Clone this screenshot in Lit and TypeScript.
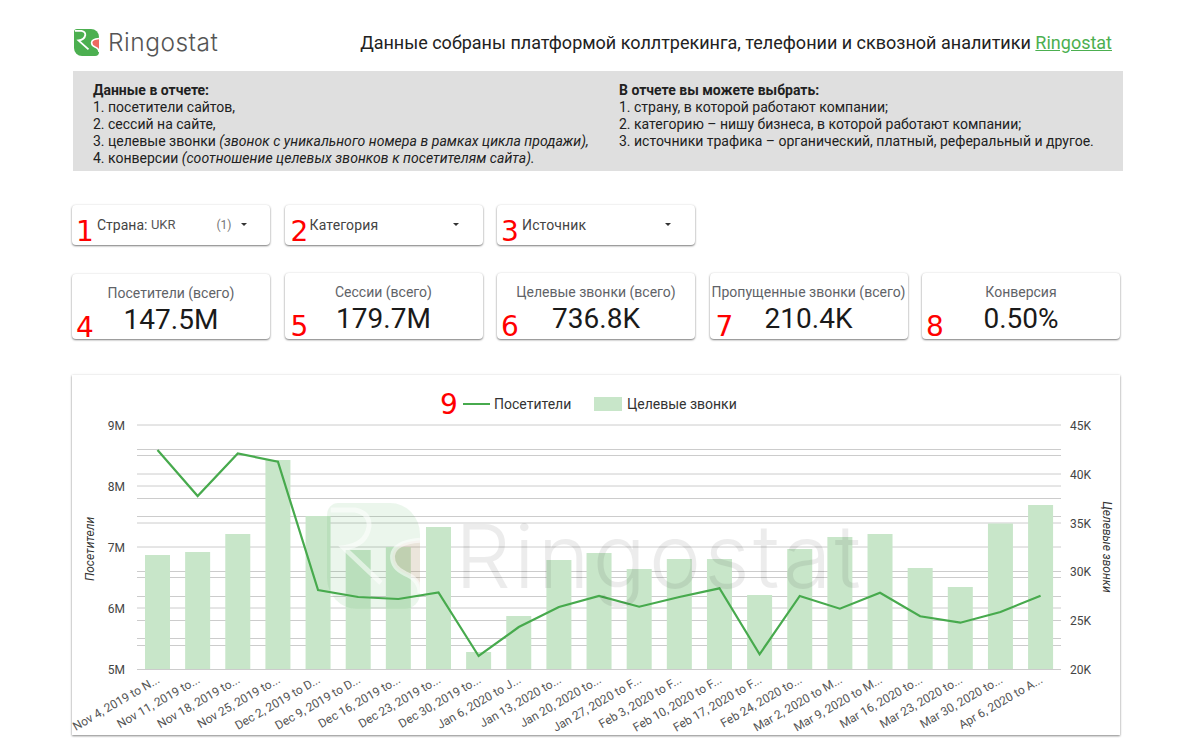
import { LitElement, html, css, svg } from "lit";
import { customElement } from "lit/decorators.js";

const tops = [555,552,534,460,516,550,547,527,652,616,560,553,569,559,559,595,549,537,534,568,587,523.5,505];
const lineY = [450,496,453.5,461.7,590,597,599,592.5,656,627,607,596,606.7,597,588.3,654.3,596,608.7,592.7,616.3,622.7,612,595.7];
const labels = ["Nov 4, 2019 to N...","Nov 11, 2019 to...","Nov 18, 2019 to...","Nov 25, 2019 to...","Dec 2, 2019 to D...","Dec 9, 2019 to D...","Dec 16, 2019 to...","Dec 23, 2019 to...","Dec 30, 2019 to...","Jan 6, 2020 to J...","Jan 13, 2020 to...","Jan 20, 2020 to...","Jan 27, 2020 to F...","Feb 3, 2020 to F...","Feb 10, 2020 to F...","Feb 17, 2020 to F...","Feb 24, 2020 to...","Mar 2, 2020 to M...","Mar 9, 2020 to M...","Mar 16, 2020 to...","Mar 23, 2020 to...","Mar 30, 2020 to...","Apr 6, 2020 to A..."];
const gridYs = [425,449.5,455.5,474,486,498.5,516.5,523,547,571.5,577.5,596.5,608,620.5,638.5,645.5,669.5];
const leftTicks: [string, number][] = [["9M",425],["8M",486],["7M",547],["6M",608],["5M",669]];
const rightTicks: [string, number][] = [["45K",425],["40K",474],["35K",523],["30K",571.5],["25K",620.5],["20K",669]];
const STEP = 40.14;
// the chart svg starts at x=72, y=375 of the page
const OX = 72, OY = 375;

const BODY = "M3 0H17A8 8 0 0 1 25 8V23A4 4 0 0 1 21 27H8A8 8 0 0 1 0 19V3A3 3 0 0 1 3 0Z";
const RED = "M25 9.500Q18 10 17.600 13.500Q17.500 16.500 21 18Q25 19.500 25 22Z";
const RPATH = "M1 1.800H7.500Q11.500 2.500 11.300 6Q10.500 10.800 4.500 11.400L14.500 20.400";
const SPATH = "M25 9.500Q18 10 17.600 13.500Q17.500 16.500 21 18Q25 19.500 25 23";

const logoMark = () => svg`
  <svg class="mark" width="25" height="27" viewBox="0 0 25 27">
    <path d=${BODY} fill="#4caf50"/>
    <path d=${RED} fill="#ee6b60"/>
    <path d=${RPATH} fill="none" stroke="#fff" stroke-width="1.800"/>
    <path d=${SPATH} fill="none" stroke="#fff" stroke-width="1.600"/>
  </svg>`;

const digit = css`
  .n { position: absolute; left: 4px; font-size: 28px; line-height: 36px; color: #f00; font-family: "DejaVu Sans", sans-serif; }
  :host([num="2"]) .n, :host([num="5"]) .n, :host([num="7"]) .n { left: 6px; }
`;

@customElement("kpi-card")
class KpiCard extends LitElement {
  static properties = { label: {}, value: {}, num: { reflect: true } };
  label = ""; value = ""; num = "";
  static styles = [digit, css`
    :host { display: block; height: 65px; position: relative; background: #fff; border-radius: 4px;
      box-shadow: 0 1px 2px rgba(0,0,0,.5), 0 0 3px rgba(0,0,0,.07); text-align: center; box-sizing: border-box; padding-top: 11px; }
    .l { font-size: 14px; line-height: 16px; color: #5f6368; white-space: nowrap; }
    .v { font-size: 28px; line-height: 32px; color: #1a1a1a; margin-top: 3px; }
    .n { top: 36px; }
  `];
  render() {
    return html`<div class="l">${this.label}</div><div class="v">${this.value}</div><span class="n">${this.num}</span>`;
  }
}

@customElement("filter-box")
class FilterBox extends LitElement {
  static properties = { num: { reflect: true } };
  num = "";
  static styles = [digit, css`
    :host { display: flex; align-items: center; height: 40px; position: relative; background: #fff; border-radius: 4px;
      box-shadow: 0 1px 2px rgba(0,0,0,.5), 0 0 3px rgba(0,0,0,.07); box-sizing: border-box; font-size: 14px; color: #444; padding-bottom: 1px; }
    ::slotted(*) { flex: 1; }
    .n { top: 9px; }
  `];
  render() { return html`<slot></slot><span class="n">${this.num}</span>`; }
}

@customElement("app-root")
class AppRoot extends LitElement {
  static styles = css`
    :host { display: block; width: 1184px; height: 743px; overflow: hidden; background: #fff; font-family: Roboto, sans-serif; color: #212121; }
    .page { padding: 0 61px 0 72px; display: flex; flex-direction: column; }
    header { height: 71px; display: flex; align-items: center; justify-content: space-between; padding: 14px 11px 0 2px; box-sizing: border-box; }
    .logo { display: flex; align-items: center; gap: 9px; margin-top: -1px; }
    .mark { display: block; }
    .word { font-family: Inter, sans-serif; font-weight: 300; font-size: 24.500px; color: #555; line-height: 30px; letter-spacing: .5px; }
    .tag { font-size: 18px; color: #222; }
    .tag a { color: #4caf50; text-decoration: underline; }
    .info { background: #dfdfdf; height: 100px; width: 1050px; margin-left: 1px; box-sizing: border-box; padding: 10.500px 20px; display: grid; grid-template-columns: 526px 1fr;
      font-size: 14px; line-height: 17px; color: #212121; }
    .info b { font-weight: 700; }
    .info i { font-style: italic; letter-spacing: .05px; }
    .filters, .kpis { display: grid; grid-template-columns: repeat(5, 198px); column-gap: 14.500px; }
    .filters { margin-top: 34px; }
    .f1 { padding-left: 25px; display: flex; align-items: center; }
    .f1 .s { font-size: 13px; color: #555; margin-left: 3.500px; }
    .f1 .c { font-size: 12px; color: #777; margin-left: 41px; }
    .f2 { padding-left: 25px; display: flex; align-items: center; color: #444; letter-spacing: .15px; }
    .arrow { width: 0; height: 0; border: 3.500px solid transparent; border-top: 3.500px solid #333; border-bottom: 0; display: block; margin-left: auto; }
    .f1 .arrow { margin-left: 9px; }
    .f2 .arrow { margin-right: 24px; }
    .kpis { margin-top: 29px; }
    .kpis kpi-card:not(:first-child) { margin-top: -1px; height: 66px; }
    .chart { margin-top: 36px; width: 1048px; height: 360px; background: #fff; box-shadow: 0 1px 2px rgba(0,0,0,.45), 0 0 3px rgba(0,0,0,.08); position: relative; }
    .chart svg.plot { display: block; overflow: visible; }
    .legend { font-size: 14px; fill: #333; }
    .tick { font-size: 12px; fill: #444; }
    .axis { font-size: 12px; fill: #333; font-style: italic; }
    .date { font-size: 12px; fill: #555; }
    .big9 { font-size: 28px; fill: #f00; font-family: "DejaVu Sans", sans-serif; }
    .wm { font-family: Inter, sans-serif; font-weight: 300; font-size: 88px; letter-spacing: 3.200px; fill: #000; opacity: .07; }
  `;

  render() {
    const x = (i: number) => 145 + i * STEP - OX;
    const cx = (i: number) => 157.5 + i * STEP - OX;
    const pts = lineY.map((y, i) => `${cx(i)},${y - OY}`).join(" ");
    return html`<div class="page">
      <header>
        <div class="logo">${logoMark()}<span class="word">Ringostat</span></div>
        <div class="tag">Данные собраны платформой коллтрекинга, телефонии и сквозной аналитики <a>Ringostat</a></div>
      </header>
      <section class="info">
        <div><b>Данные в отчете:</b><br>1. посетители сайтов,<br>2. сессий на сайте,<br>3. целевые звонки <i>(звонок с уникального номера в рамках цикла продажи),</i><br>4. конверсии <i>(соотношение целевых звонков к посетителям сайта).</i></div>
        <div><b>В отчете вы можете выбрать:</b><br>1. страну, в которой работают компании;<br>2. категорию – нишу бизнеса, в которой работают компании;<br>3. источники трафика – органический, платный, реферальный и другое.</div>
      </section>
      <div class="filters">
        <filter-box num="1"><div class="f1">Страна:<span class="s">UKR</span><span class="c">(1)</span><span class="arrow"></span></div></filter-box>
        <filter-box num="2"><div class="f2">Категория<span class="arrow"></span></div></filter-box>
        <filter-box num="3"><div class="f2">Источник<span class="arrow"></span></div></filter-box>
      </div>
      <div class="kpis">
        <kpi-card label="Посетители (всего)" value="147.5M" num="4"></kpi-card>
        <kpi-card label="Сессии (всего)" value="179.7M" num="5"></kpi-card>
        <kpi-card label="Целевые звонки (всего)" value="736.8K" num="6"></kpi-card>
        <kpi-card label="Пропущенные звонки (всего)" value="210.4K" num="7"></kpi-card>
        <kpi-card label="Конверсия" value="0.50%" num="8"></kpi-card>
      </div>
      <div class="chart">
        <svg class="plot" width="1048" height="360">
          ${gridYs.map(y => svg`<line x1=${137-OX} x2=${1061-OX} y1=${y-OY} y2=${y-OY} stroke="#ccc" stroke-width="1"/>`)}
          ${tops.map((t, i) => svg`<rect x=${x(i)} y=${t-OY} width="25" height=${669-t} fill="#c8e6c9"/>`)}
          <polyline points=${pts} fill="none" stroke="#47aa4d" stroke-width="2.200"/>
          <g transform="translate(${327-OX},${503-OY}) scale(3.72,3.92)">
            <path d=${BODY} fill="#4caf50" opacity=".11"/>
            <path d=${RED} fill="#ee6b60" opacity=".12"/>
            <path d=${RPATH} fill="none" stroke="#fff" stroke-width="1.300" opacity=".55"/>
            <path d=${SPATH} fill="none" stroke="#fff" stroke-width="1.300" opacity=".55"/>
          </g>
          <text class="wm" x=${455-OX} y=${588-OY}>Ringostat</text>
          ${leftTicks.map(([s, y]) => svg`<text class="tick" x=${125-OX} y=${y+4.500-OY} text-anchor="end">${s}</text>`)}
          ${rightTicks.map(([s, y]) => svg`<text class="tick" x=${1070-OX} y=${y+4.500-OY}>${s}</text>`)}
          <text class="axis" transform="translate(${94-OX},${549-OY}) rotate(-90)" text-anchor="middle">Посетители</text>
          <text class="axis" transform="translate(${1103-OX},${547-OY}) rotate(90)" text-anchor="middle">Целевые звонки</text>
          ${labels.map((s, i) => svg`<text class="date" transform="translate(${cx(i)+3},${682-OY}) rotate(-30)" text-anchor="end">${s}</text>`)}
          <text class="big9" x=${440-OX} y=${414-OY}>9</text>
          <line x1=${463-OX} x2=${490-OX} y1=${404-OY} y2=${404-OY} stroke="#47aa4d" stroke-width="2"/>
          <text class="legend" x=${494-OX} y=${409-OY}>Посетители</text>
          <rect x=${594-OX} y=${397-OY} width="28" height="14" fill="#c8e6c9"/>
          <text class="legend" x=${627-OX} y=${409-OY}>Целевые звонки</text>
        </svg>
      </div>
    </div>`;
  }
}
